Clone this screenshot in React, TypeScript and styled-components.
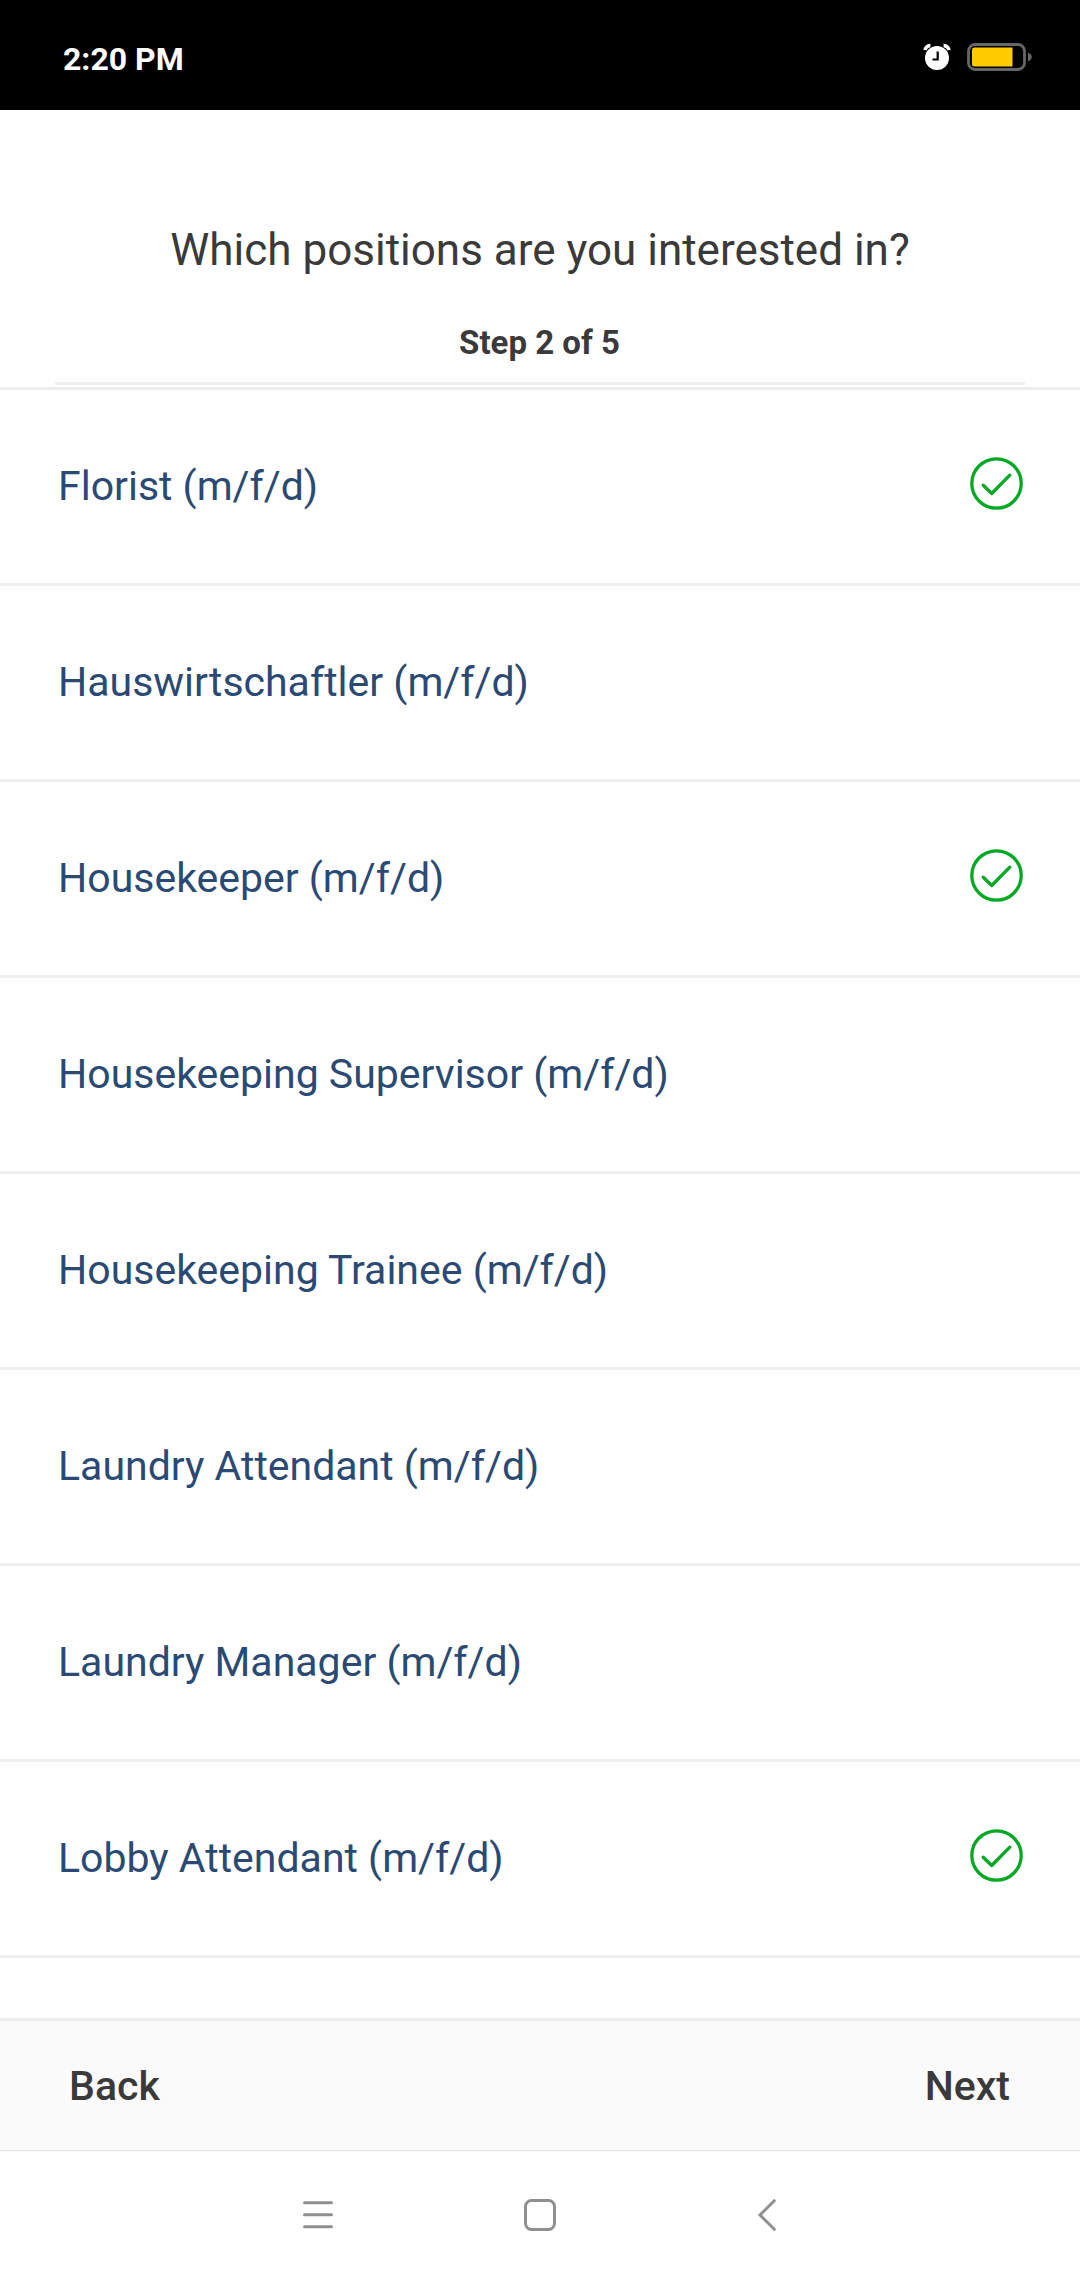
import React from "react";
import styled, { createGlobalStyle } from "styled-components";

const Global = createGlobalStyle`
  * { box-sizing: border-box; }
  body { margin: 0; background: #fff; font-family: Roboto, sans-serif; }
`;
const Screen = styled.div`
  width: 1080px;
  height: 2280px;
  display: flex;
  flex-direction: column;
  overflow: hidden;
  background: #fff;
`;
const StatusBar = styled.header`
  height: 110px;
  flex: none;
  background: #000;
  color: #fff;
  display: flex;
  align-items: center;
  justify-content: space-between;
  padding: 8px 47px 0 63px;
`;
const Clock = styled.span`
  font: 700 32px/40px Roboto, sans-serif;
`;
const StatusIcons = styled.div`
  display: flex;
  align-items: center;
  gap: 16px;
  margin-bottom: 4px;
`;
const Heading = styled.section`
  height: 275px;
  flex: none;
  margin: 0 55px;
  border-bottom: 3px solid #eee;
  display: flex;
  flex-direction: column;
  align-items: center;
  padding-top: 112px;
`;
const Title = styled.h1`
  margin: 0;
  font-size: 44px;
  line-height: 56px;
  font-weight: 400;
  color: #3a3a3a;
`;
const Step = styled.p`
  margin: 43px 0 0;
  padding-right: 1px;
  font-size: 33px;
  line-height: 44px;
  font-weight: 700;
  color: #3a3a3a;
`;
const List = styled.ul`
  list-style: none;
  margin: 2px 0 0;
  padding: 0;
  border-top: 3px solid #eee;
  flex: 1;
  overflow: hidden;
`;
const Row = styled.li`
  height: 196px;
  padding: 0 57px 6px 58px;
  border-bottom: 3px solid #eee;
  display: flex;
  align-items: center;
  justify-content: space-between;
`;
const Label = styled.span`
  font-size: 41px;
  line-height: 48px;
  padding-top: 4px;
  color: #2b4a73;
`;
const Footer = styled.footer`
  height: 133px;
  flex: none;
  background: #fafafa;
  border-top: 3px solid #eee;
  border-bottom: 1px solid #e2e2e2;
  display: flex;
  align-items: center;
  justify-content: space-between;
  padding: 0 70px 0 69px;
`;
const Action = styled.button`
  border: 0;
  background: none;
  padding: 0;
  font: 500 41px/50px Roboto, sans-serif;
  color: #3a3a3a;
`;
const NavBar = styled.nav`
  height: 129px;
  flex: none;
  display: flex;
  align-items: center;
  justify-content: center;
  gap: 186px;
  padding-bottom: 1px;
`;

const AlarmIcon = () => (
  <svg width="28" height="28" viewBox="0 0 28 28" fill="none">
    <circle cx="14" cy="15" r="12" fill="#fff" />
    <path d="M2.2 7.2A5 5 0 0 1 7.4 2.6M20.6 2.6a5 5 0 0 1 5.2 4.6" stroke="#fff" strokeWidth="3.6" />
    <path d="M14.7 8.5V16.5H9.5" stroke="#000" strokeWidth="2.2" />
  </svg>
);
const BatteryIcon = () => (
  <svg width="66" height="28" viewBox="0 0 66 28" fill="none">
    <rect x="1.5" y="1.5" width="56" height="25" rx="6.5" stroke="#666" strokeWidth="2.8" />
    <path d="M5 7a2.5 2.5 0 0 1 2.5-2.5H45.5V23.5H7.5A2.5 2.5 0 0 1 5 21Z" fill="#ffcc00" />
    <path d="M61 9.5C66 11.5 66 16.5 61 18.5Z" fill="#666" />
  </svg>
);
const CheckIcon = () => (
  <svg width="53" height="53" viewBox="0 0 53 53" fill="none" stroke="#05a823" strokeWidth="3.3" strokeLinecap="round" strokeLinejoin="round">
    <circle cx="26.5" cy="26.5" r="24.7" />
    <path d="M13.2 28.2L21.7 36.5L39.8 18.2" />
  </svg>
);
const MenuIcon = () => (
  <svg width="36" height="36" viewBox="0 0 36 36" stroke="#8f8f8f" strokeWidth="3" strokeLinecap="round">
    <path d="M4.5 5.7H31.5M4.5 17.7H31.5M4.5 29.7H31.5" />
  </svg>
);
const HomeIcon = () => (
  <svg width="36" height="36" viewBox="0 0 36 36" fill="none" stroke="#8f8f8f" strokeWidth="3">
    <rect x="3.5" y="3.5" width="29" height="29" rx="6" />
  </svg>
);
const BackIcon = () => (
  <svg width="36" height="36" viewBox="0 0 36 36" fill="none" stroke="#8f8f8f" strokeWidth="3" strokeLinecap="round">
    <path d="M30.3 3.7L16 18L30.3 32.3" />
  </svg>
);

const positions = [
  { name: "Florist (m/f/d)", selected: true },
  { name: "Hauswirtschaftler (m/f/d)", selected: false },
  { name: "Housekeeper (m/f/d)", selected: true },
  { name: "Housekeeping Supervisor (m/f/d)", selected: false },
  { name: "Housekeeping Trainee (m/f/d)", selected: false },
  { name: "Laundry Attendant (m/f/d)", selected: false },
  { name: "Laundry Manager (m/f/d)", selected: false },
  { name: "Lobby Attendant (m/f/d)", selected: true },
];

export default function App() {
  return (
    <Screen>
      <Global />
      <StatusBar>
        <Clock>2:20 PM</Clock>
        <StatusIcons>
          <AlarmIcon />
          <BatteryIcon />
        </StatusIcons>
      </StatusBar>
      <Heading>
        <Title>Which positions are you interested in?</Title>
        <Step>Step 2 of 5</Step>
      </Heading>
      <List>
        {positions.map((p) => (
          <Row key={p.name}>
            <Label>{p.name}</Label>
            {p.selected && <CheckIcon />}
          </Row>
        ))}
      </List>
      <Footer>
        <Action>Back</Action>
        <Action>Next</Action>
      </Footer>
      <NavBar>
        <MenuIcon />
        <HomeIcon />
        <BackIcon />
      </NavBar>
    </Screen>
  );
}
